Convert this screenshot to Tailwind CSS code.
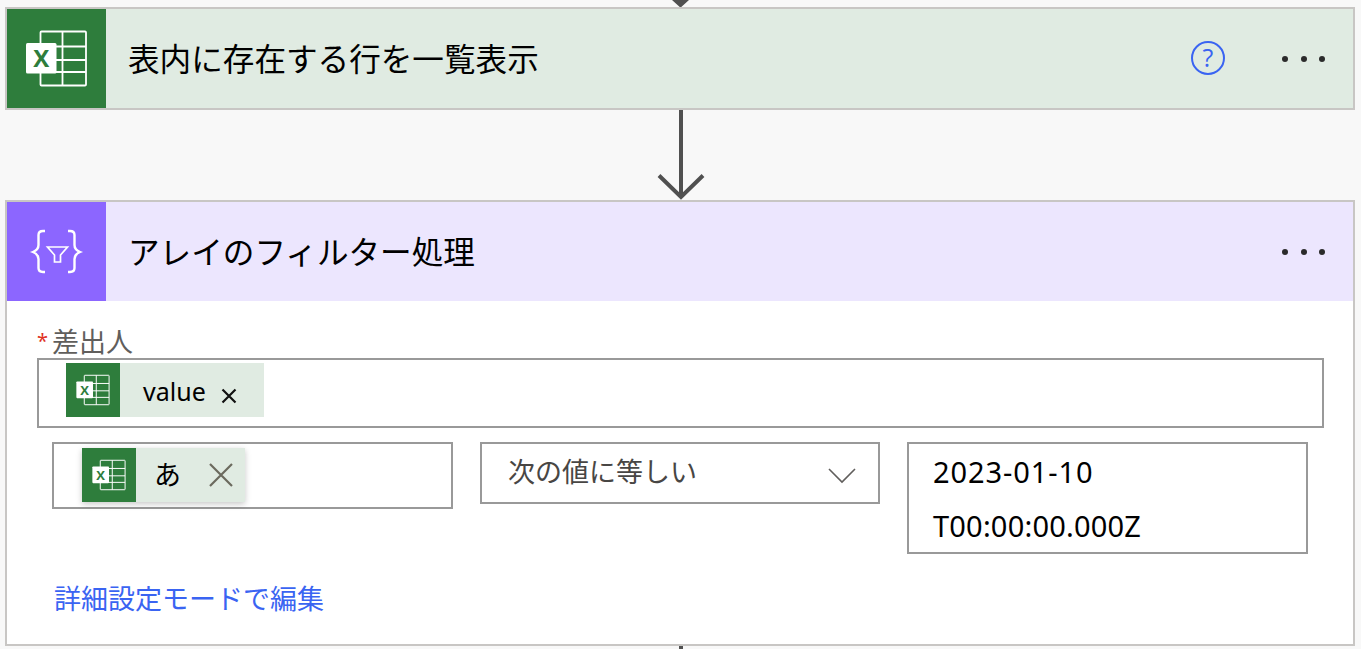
<!DOCTYPE html>
<html lang="ja">
<head>
    <meta charset="UTF-8">
    <title>Flow</title>
    <script src="https://cdn.jsdelivr.net/npm/@tailwindcss/browser@4"></script>
</head>
<body class="bg-[#f8f8f8] font-['Noto_Sans','Noto_Sans_CJK_JP',sans-serif] overflow-hidden">
    <svg class="hidden">
        <symbol id="excel" viewBox="0 0 99 99">
            <rect x="33.5" y="22.5" width="45.5" height="54" rx="1" fill="none" stroke="#fff" stroke-width="1.8"/>
            <path d="M55.5 22.5V76.5M33.5 37.5H79M33.5 51H79M33.5 63H79" fill="none" stroke="#fff" stroke-width="1.8"/>
            <rect x="19" y="34" width="30.5" height="30.5" rx="1.5" fill="#fff"/>
            <text x="34.2" y="58" text-anchor="middle" font-size="24" font-weight="700" fill="#2e7d3c" font-family="Open Sans">X</text>
        </symbol>
    </svg>

    <!-- arrow tip from the step above -->
    <div class="h-[7px] relative overflow-hidden">
        <svg class="absolute left-[668px] top-[-24px]" width="25" height="31" viewBox="0 0 25 31" fill="none" stroke="#505050" stroke-width="4"><path d="M12.5 0V29M1.5 19L12.5 29L23.5 19"/></svg>
    </div>

    <!-- Excel step -->
    <div class="mx-[5px] w-[1350px] h-[103px] border-2 border-[#c8c6c4] bg-[#e0ebe2] flex items-center">
        <div class="w-[99px] h-[99px] bg-[#2e7d3c] shrink-0">
            <svg class="w-[99px] h-[99px]"><use href="#excel"/></svg>
        </div>
        <div class="pl-[22px] text-[31.6px] text-black">表内に存在する行を一覧表示</div>
        <svg class="ml-auto mr-[57px] mt-[-2px]" width="34" height="34" viewBox="0 0 34 34">
            <circle cx="17" cy="17" r="16" fill="none" stroke="#3a64f2" stroke-width="2"/>
            <text x="17" y="26" text-anchor="middle" font-size="25" fill="#3a64f2" font-family="Open Sans">?</text>
        </svg>
        <div class="flex gap-[12.5px] pr-[28px]">
            <span class="w-[6px] h-[6px] rounded-full bg-[#2b2b2b]"></span>
            <span class="w-[6px] h-[6px] rounded-full bg-[#2b2b2b]"></span>
            <span class="w-[6px] h-[6px] rounded-full bg-[#2b2b2b]"></span>
        </div>
    </div>

    <!-- connector -->
    <div class="h-[90px] flex justify-center">
        <svg width="48" height="90" viewBox="0 0 48 90" fill="none" stroke="#505050" stroke-width="4"><path d="M24 0V87M2 65.5L24 87L46 65.5"/></svg>
    </div>

    <!-- Filter array step -->
    <div class="mx-[5px] w-[1350px] h-[446px] border-2 border-[#c8c6c4] bg-white">
        <div class="h-[99px] bg-[#ece6fe] flex items-center">
            <div class="w-[99px] h-[99px] bg-[#8c66ff] shrink-0">
                <svg width="99" height="99" viewBox="0 0 99 99" fill="none" stroke="#fff" stroke-width="2.4">
                    <path d="M38 29H36C33 29 31.5 30.5 31.5 33V43C31.5 46.5 29.5 48.5 26 50C29.5 51.5 31.5 53.5 31.5 57V66C31.5 68.5 33 70 36 70H38"/>
                    <path d="M61 29H63C66 29 67.5 30.5 67.5 33V43C67.5 46.5 69.5 48.5 73 50C69.5 51.5 67.5 53.5 67.5 57V66C67.5 68.5 66 70 63 70H61"/>
                    <path d="M40.5 45H60.5L53.5 53V60H47.5V53Z" stroke-width="1.7"/>
                </svg>
            </div>
            <div class="pl-[22px] text-[31.6px] text-black">アレイのフィルター処理</div>
            <div class="ml-auto flex gap-[12.5px] pr-[28px]">
                <span class="w-[6px] h-[6px] rounded-full bg-[#2b2b2b]"></span>
                <span class="w-[6px] h-[6px] rounded-full bg-[#2b2b2b]"></span>
                <span class="w-[6px] h-[6px] rounded-full bg-[#2b2b2b]"></span>
            </div>
        </div>

        <div class="pl-[30px] pr-[29px] pt-[26px]">
            <div class="h-[31px] flex items-start text-[27px] text-[#605e5c] leading-[30px]">
                <span class="text-[#e0301e] text-[20px] w-[15px] leading-[28px]">*</span><span>差出人</span>
            </div>
            <div class="h-[70px] border-2 border-[#999999] pl-[27px] pt-[3px]">
                <div class="inline-flex h-[54px] w-[198px] bg-[#e0ebe2] items-center">
                    <svg class="w-[54px] h-[54px] bg-[#2e7d3c]"><use href="#excel"/></svg>
                    <span class="ml-[23px] mt-[3px] text-[25px] text-black">value</span>
                    <svg class="ml-[15px] mt-[12px]" width="16" height="16" viewBox="0 0 16 16" stroke="#111" stroke-width="2.2"><path d="M1.5 1.5L14.5 14.5M14.5 1.5L1.5 14.5"/></svg>
                </div>
            </div>
        </div>

        <div class="flex items-start pl-[45px] mt-[14px]">
            <div class="w-[401px] h-[67px] border-2 border-[#999999] pl-[28px] pt-[4px]">
                <div class="inline-flex h-[54px] w-[163px] bg-[#e0ebe2] items-center shadow-[0_2px_6px_rgba(0,0,0,0.22)]">
                    <svg class="w-[54px] h-[54px] bg-[#2e7d3c]"><use href="#excel"/></svg>
                    <span class="ml-[18px] text-[27px] text-black">あ</span>
                    <svg class="ml-[28px]" width="24" height="24" viewBox="0 0 24 24" stroke="#6b6a5e" stroke-width="2.2"><path d="M1 1L23 23M23 1L1 23"/></svg>
                </div>
            </div>
            <div class="ml-[27px] w-[400px] h-[62px] border-2 border-[#999999] flex items-center pl-[26px] pr-[22px] text-[27px] text-[#484644]">
                <span class="mt-[-2px]">次の値に等しい</span>
                <svg class="ml-auto mt-[6px]" width="28" height="16" viewBox="0 0 28 16" fill="none" stroke="#605e5c" stroke-width="1.6"><path d="M1 1L14 14L27 1"/></svg>
            </div>
            <div class="ml-[27px] w-[401px] h-[112px] border-2 border-[#999999] pl-[24px] pt-[1px] text-[29px] leading-[54px] text-black">
                <div class="tracking-[0.9px]">2023-01-10</div>
                <div class="tracking-[0.2px]">T00:00:00.000Z</div>
            </div>
        </div>

        <div class="pl-[47px] mt-[27px] text-[27px] leading-[36px] text-[#3a64f2]">詳細設定モードで編集</div>
    </div>

    <div class="h-[3px] flex justify-center">
        <div class="w-[4px] h-[3px] bg-[#505050]"></div>
    </div>
</body>
</html>
